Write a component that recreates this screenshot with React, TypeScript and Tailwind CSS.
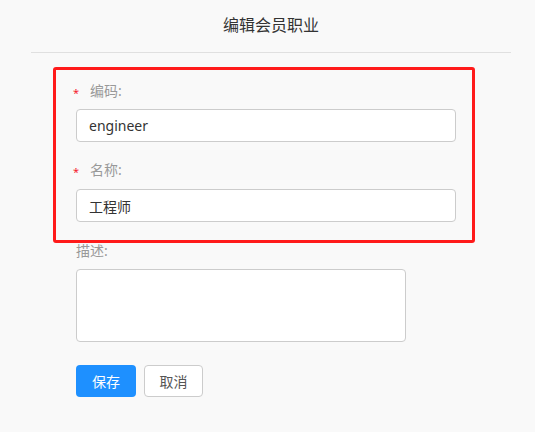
import React from "react";

const font = "font-['Noto_Sans','Noto_Sans_CJK_SC',sans-serif]";

function Label({ text, required }: { text: string; required?: boolean }) {
  return (
    <div className="flex h-5 items-center text-[14px] leading-5 text-[#999]">
      {required && (
        <span className="-ml-[3px] w-[17px] translate-y-[2px] text-[11px] text-[#f5222d]">
          *
        </span>
      )}
      <span>{text}</span>
    </div>
  );
}

export default function App() {
  return (
    <div className={`min-h-screen w-[535px] bg-[#f9f9f9] ${font}`}>
      {/* 标题 */}
      <div className="ml-[31px] flex h-[53px] w-[480px] items-center justify-center border-b border-[#e0e0e0] pb-[3px] text-[16px] text-[#333]">
        编辑会员职业
      </div>

      <div className="relative pl-[76px] pt-[28px]">
        {/* 编码 */}
        <Label text="编码:" required />
        <input
          readOnly
          value="engineer"
          className="mt-[8px] block h-[33px] w-[380px] rounded-[4px] border border-[#ccc] bg-white px-[12px] text-[14px] text-[#333] outline-none"
        />

        {/* 名称 */}
        <div className="mt-[18px]">
          <Label text="名称:" required />
        </div>
        <input
          readOnly
          value="工程师"
          className="mt-[9px] block h-[33px] w-[380px] rounded-[4px] border border-[#ccc] bg-white px-[12px] text-[14px] text-[#333] outline-none"
        />

        {/* 描述 */}
        <div className="mt-[19px]">
          <Label text="描述:" />
        </div>
        <textarea
          readOnly
          className="mt-[8px] block h-[73px] w-[330px] resize-none rounded-[4px] border border-[#ccc] bg-white px-[12px] py-[6px] text-[14px] outline-none"
        />

        <div className="mt-[23px] flex gap-[8px]">
          <button className="h-[32px] w-[60px] rounded-[4px] bg-[#1e90ff] text-[14px] text-white">
            保存
          </button>
          <button className="h-[32px] w-[59px] rounded-[4px] border border-[#ccc] bg-white text-[14px] text-[#555]">
            取消
          </button>
        </div>

        {/* 标注框 */}
        <div className="pointer-events-none absolute left-[53px] top-[14px] h-[176px] w-[422px] rounded-[3px] border-[3px] border-[#ff1a1a]" />
      </div>
    </div>
  );
}
